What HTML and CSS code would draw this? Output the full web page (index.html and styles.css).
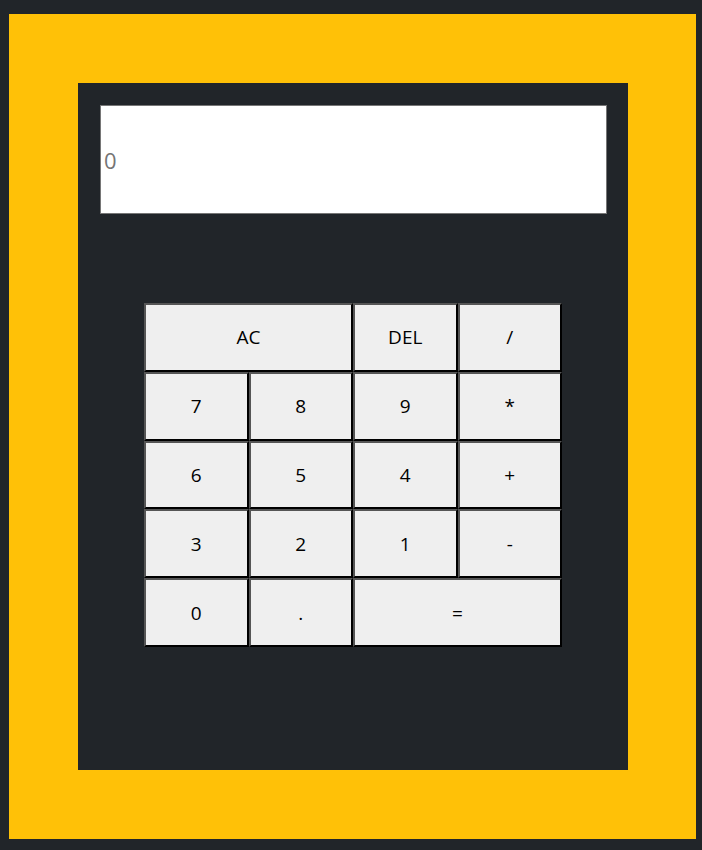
FILE: index.html
```html
<!DOCTYPE html>
<html>
<head>
<meta charset="utf-8">
<link rel="stylesheet" href="styles.css">
</head>
<body>
<div class="frame">
  <div class="calc">
    <div class="display">0</div>
    <div class="keys">
      <button class="key span2">AC</button>
      <button class="key">DEL</button>
      <button class="key">/</button>
      <button class="key">7</button>
      <button class="key">8</button>
      <button class="key">9</button>
      <button class="key">*</button>
      <button class="key">6</button>
      <button class="key">5</button>
      <button class="key">4</button>
      <button class="key">+</button>
      <button class="key">3</button>
      <button class="key">2</button>
      <button class="key">1</button>
      <button class="key">-</button>
      <button class="key">0</button>
      <button class="key">.</button>
      <button class="key span2">=</button>
    </div>
  </div>
</div>
</body>
</html>
```
FILE: styles.css
```css
html, body {
  margin: 0;
  padding: 0;
  background: #212529;
}
body {
  padding: 14px 6px 11px 9px;
  font-family: "Open Sans", "Noto Sans", sans-serif;
}
.frame {
  background: #ffc107;
  height: 825px;
  box-sizing: border-box;
  padding: 69px 68px 0 69px;
}
.calc {
  background: #212529;
  height: 687px;
  box-sizing: border-box;
  padding: 22px 21px 0 22px;
}
.display {
  height: 109px;
  box-sizing: border-box;
  background: #fff;
  border: 1px solid #767676;
  display: flex;
  align-items: center;
  padding-left: 3px;
  font-size: 22px;
  color: #757575;
}
.keys {
  margin: 89px 0 0 44px;
  width: 418px;
  height: 344px;
  display: grid;
  grid-template-columns: repeat(4, 1fr);
  grid-template-rows: repeat(5, 1fr);
}
.key {
  margin: 0;
  padding: 0;
  background: #efefef;
  border-style: solid;
  border-width: 2px;
  border-color: #555 #000 #000 #555;
  font-family: "Open Sans", "Noto Sans", sans-serif;
  font-size: 19px;
  color: #000;
}
.span2 {
  grid-column: span 2;
}
```
